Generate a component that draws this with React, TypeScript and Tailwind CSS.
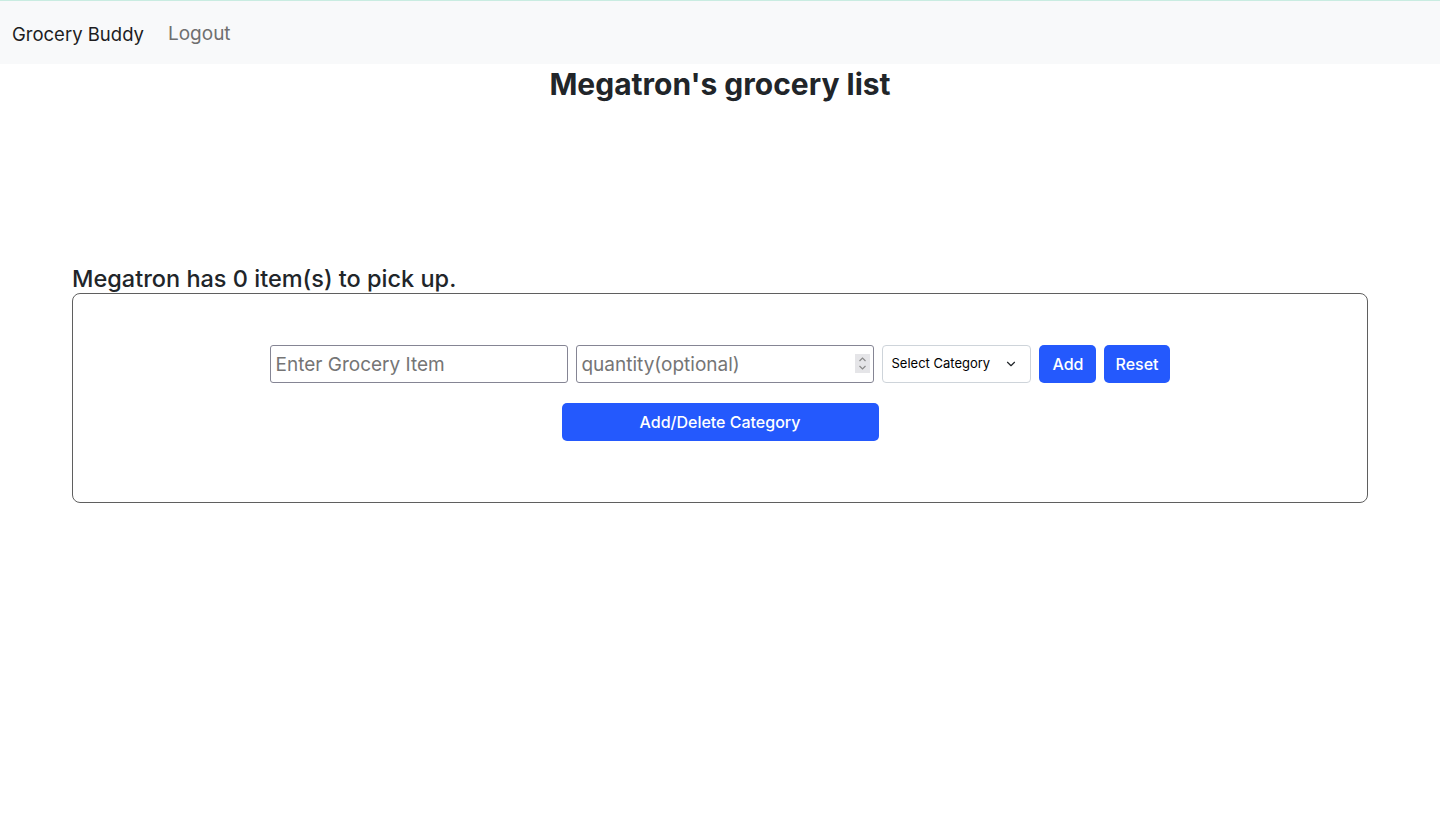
import React, { useState } from 'react';
import { ChevronDown } from 'lucide-react';

export default function App() {
  const [item, setItem] = useState('');
  const [quantity, setQuantity] = useState('');
  const [category, setCategory] = useState('');

  const reset = () => {
    setItem('');
    setQuantity('');
    setCategory('');
  };

  return (
    <div className="min-h-screen bg-white text-[#212529]" style={{ fontFamily: 'Inter, "Noto Sans", sans-serif' }}>
      <nav className="h-16 bg-[#f8f9fa] border-t border-[#c9ece1] flex items-center px-3 pt-1 gap-6">
        <span className="text-[18.5px] text-[#1d1d1f]">Grocery Buddy</span>
        <a className="text-[19px] text-[#6f6f6f] cursor-pointer">Logout</a>
      </nav>

      <h1 className="text-center text-[30px] font-bold mt-[2px] leading-9">Megatron's grocery list</h1>

      <div className="w-[90%] mx-auto mt-[163px]">
        <h3 className="text-[23.5px] font-medium leading-7">Megatron has 0 item(s) to pick up.</h3>
        <div className="border-[1.5px] border-[#5f5f5f] rounded-lg pt-[51px] pb-[61px] flex flex-col items-center gap-5">
          <div className="flex items-center gap-2">
            <input
              value={item}
              onChange={(e) => setItem(e.target.value)}
              placeholder="Enter Grocery Item"
              className="w-[298px] h-[38px] border border-[#858594] rounded-[3px] px-1 text-[19px] placeholder:text-[#757575] outline-none"
            />
            <div className="relative">
              <input
                value={quantity}
                onChange={(e) => setQuantity(e.target.value)}
                placeholder="quantity(optional)"
                className="w-[298px] h-[38px] border border-[#858594] rounded-[3px] px-1 text-[19px] placeholder:text-[#757575] outline-none"
              />
              <div className="absolute right-[4px] top-[9px] w-[15px] h-[19px] bg-[#e5e5e8] flex flex-col items-center justify-center">
                <svg width="9" height="15" viewBox="0 0 9 15" fill="none" stroke="#8a8a8a" strokeWidth="1.2">
                  <path d="M1.5 5 L4.5 2 L7.5 5" />
                  <path d="M1.5 10 L4.5 13 L7.5 10" />
                </svg>
              </div>
            </div>
            <div className="relative">
              <select
                value={category}
                onChange={(e) => setCategory(e.target.value)}
                className="appearance-none w-[149px] h-[38px] border border-[#ced4da] rounded-[4px] pl-2 pr-6 text-[13px] text-black bg-white outline-none"
              >
                <option value="">Select Category</option>
                <option value="produce">Produce</option>
                <option value="dairy">Dairy</option>
              </select>
              <ChevronDown className="absolute right-[13px] top-[12px] w-[14px] h-[14px] pointer-events-none" strokeWidth={2} />
            </div>
            <button className="h-[38px] px-[13px] bg-[#2459fd] text-white rounded-[5px] text-[16px] font-medium">Add</button>
            <button onClick={reset} className="h-[38px] px-[11px] bg-[#2459fd] text-white rounded-[5px] text-[16px] font-medium">Reset</button>
          </div>
          <button className="w-[317px] h-[38px] bg-[#2459fd] text-white rounded-[5px] text-[16px] font-medium">Add/Delete Category</button>
        </div>
      </div>
    </div>
  );
}
